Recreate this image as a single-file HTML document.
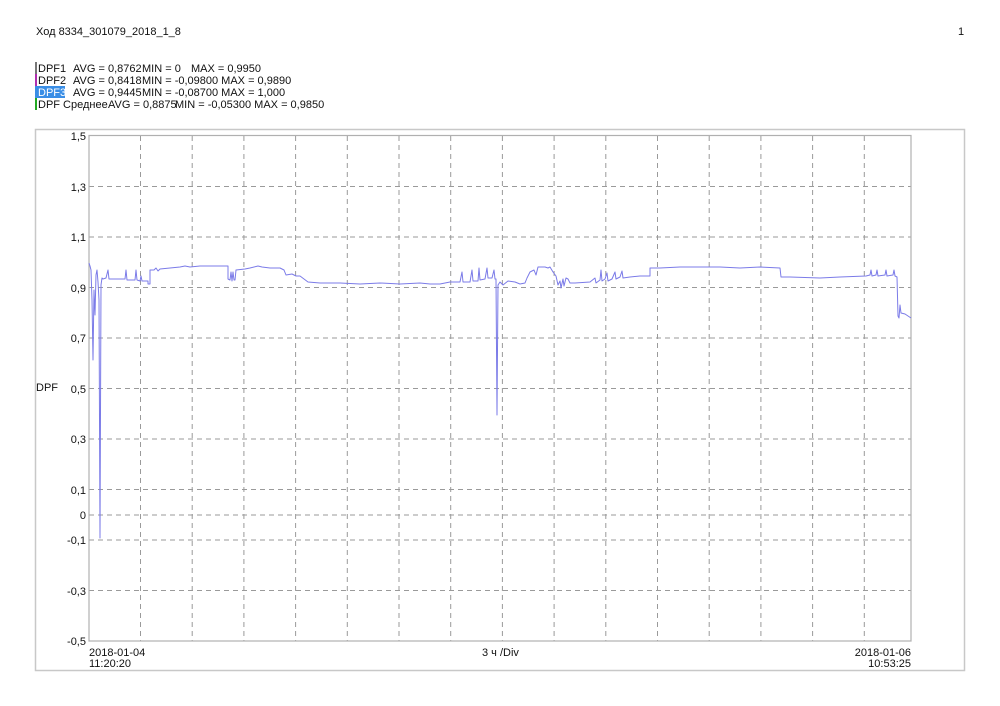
<!DOCTYPE html>
<html><head><meta charset="utf-8"><style>
html,body{margin:0;padding:0;background:#fff;}
svg{display:block;font-family:"Liberation Sans",Arial,sans-serif;}
</style></head><body>
<svg width="1000" height="706" viewBox="0 0 1000 706" xmlns="http://www.w3.org/2000/svg">
<rect width="1000" height="706" fill="#fff"/>
<text x="36" y="35" font-size="11" fill="#111">Ход 8334_301079_2018_1_8</text>
<text x="958" y="35" font-size="11" fill="#111">1</text>
<!-- legend -->
<rect x="35" y="62" width="2" height="12" fill="#777"/>
<rect x="35" y="74" width="2" height="12" fill="#b030b0"/>
<rect x="35" y="86" width="30" height="12" fill="#3a8ee6"/>
<rect x="35" y="98" width="2" height="12" fill="#2a2"/>
<g font-size="11" fill="#111">
<text x="38" y="72">DPF1</text><text x="73" y="72">AVG = 0,8762</text><text x="142" y="72">MIN = 0</text><text x="191" y="72">MAX = 0,9950</text>
<text x="38" y="84">DPF2</text><text x="73" y="84">AVG = 0,8418</text><text x="142" y="84">MIN = -0,09800 MAX = 0,9890</text>
<text x="38" y="96" fill="#fff">DPF3</text><text x="73" y="96">AVG = 0,9445</text><text x="142" y="96">MIN = -0,08700 MAX = 1,000</text>
<text x="38" y="108">DPF Среднее</text><text x="108" y="108">AVG = 0,8875</text><text x="175" y="108">MIN = -0,05300 MAX = 0,9850</text>
</g>
<!-- frames -->
<rect x="35.5" y="129.5" width="929" height="541" fill="none" stroke="#c8c8c8" stroke-width="1.5"/>
<g stroke="#9a9a9a" stroke-width="1" stroke-dasharray="5,4" fill="none">
<line x1="89" x2="911" y1="186.5" y2="186.5"/>
<line x1="89" x2="911" y1="237" y2="237"/>
<line x1="89" x2="911" y1="287.5" y2="287.5"/>
<line x1="89" x2="911" y1="338" y2="338"/>
<line x1="89" x2="911" y1="388.5" y2="388.5"/>
<line x1="89" x2="911" y1="439" y2="439"/>
<line x1="89" x2="911" y1="489.5" y2="489.5"/>
<line x1="89" x2="911" y1="515" y2="515"/>
<line x1="89" x2="911" y1="540" y2="540"/>
<line x1="89" x2="911" y1="590.5" y2="590.5"/>
<line x1="140.5" x2="140.5" y1="136" y2="641"/>
<line x1="192.2" x2="192.2" y1="136" y2="641"/>
<line x1="243.9" x2="243.9" y1="136" y2="641"/>
<line x1="295.6" x2="295.6" y1="136" y2="641"/>
<line x1="347.3" x2="347.3" y1="136" y2="641"/>
<line x1="399" x2="399" y1="136" y2="641"/>
<line x1="450.7" x2="450.7" y1="136" y2="641"/>
<line x1="502.4" x2="502.4" y1="136" y2="641"/>
<line x1="554.1" x2="554.1" y1="136" y2="641"/>
<line x1="605.8" x2="605.8" y1="136" y2="641"/>
<line x1="657.5" x2="657.5" y1="136" y2="641"/>
<line x1="709.2" x2="709.2" y1="136" y2="641"/>
<line x1="760.9" x2="760.9" y1="136" y2="641"/>
<line x1="812.6" x2="812.6" y1="136" y2="641"/>
<line x1="864.3" x2="864.3" y1="136" y2="641"/>
</g>
<rect x="89" y="135.5" width="822" height="505.5" fill="none" stroke="#b0b0b0" stroke-width="1.2"/>
<!-- y labels -->
<g font-size="11" fill="#111" text-anchor="end">
<text x="86" y="140">1,5</text><text x="86" y="191">1,3</text><text x="86" y="241">1,1</text>
<text x="86" y="292">0,9</text><text x="86" y="342">0,7</text><text x="86" y="393">0,5</text>
<text x="86" y="443">0,3</text><text x="86" y="494">0,1</text><text x="86" y="519">0</text>
<text x="86" y="544">-0,1</text><text x="86" y="595">-0,3</text><text x="86" y="645">-0,5</text>
</g>
<text x="36" y="391" font-size="11" fill="#111">DPF</text>
<g font-size="11" fill="#111">
<text x="89" y="656">2018-01-04</text><text x="89" y="667">11:20:20</text>
<text x="482" y="656">3 ч /Div</text>
<text x="911" y="656" text-anchor="end">2018-01-06</text><text x="911" y="667" text-anchor="end">10:53:25</text>
</g>
<!-- data -->
<polyline fill="none" stroke="#7b7be8" stroke-width="1" stroke-linejoin="round" points="
89,263 90,266 91,270 92,300 93,360 94,290 95,315 96,275 97,270 98,282 99,300 100,538 101,285 102,278 103,279 106,278 108,270 109,279 120,279 125,279 126,270 127,280 135,280 136,270 137,280 140,281 141,276 142,281 148,281 148,284 149,284 150,284 150,270 154,270 156,268 158,271 160,269 170,268 180,267 185,266 190,267 200,266 210,266 220,266 228,266 228,279 230,280 231,272 232,281 233,272 234,280 235,280 236,270 245,269 250,268 258,266 262,267 270,268 280,268 284,270 286,275 292,274 296,276 300,276 304,279 308,282 320,283 330,283 340,283 360,284 380,283 400,284 420,283 430,284 440,284 450,282 460,282 462,272 463,282 470,282 472,270 473,281 478,281 479,268 480,280 485,279 487,268 488,278 492,278 494,270 495,279 496,279 497,415 498,285 500,282 503,285 508,281 515,282 520,284 525,283 527,278 530,272 534,270 536,275 538,267 540,267 545,267 548,268 550,267 553,272 556,276 558,285 560,281 561,288 563,279 564,286 566,278 568,279 570,283 575,283 590,282 595,278 596,283 600,280 601,270 602,281 605,279 607,273 608,281 612,279 615,272 616,279 620,277 622,271 623,278 630,277 640,276 650,276 650,268 660,268 680,267 700,267 720,267 740,268 760,267 780,268 781,277 790,277 820,278 840,277 866,276 870,275 871,270 872,276 876,275 877,270 878,276 885,275 886,270 887,276 893,275 894,270 895,276 897,277 898,316 899,318 900,305 901,313 905,314 908,316 911,318"/>
</svg>
</body></html>
